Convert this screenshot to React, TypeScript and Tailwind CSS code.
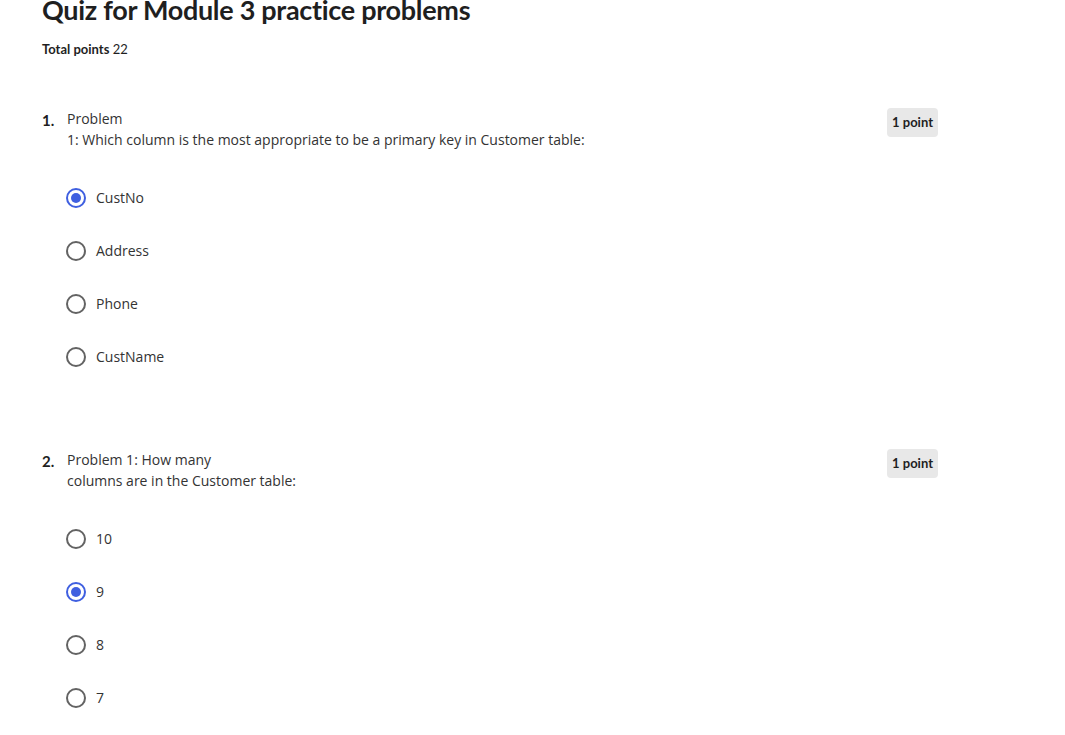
import React from 'react';

type Question = {
    num: string;
    lines: string[];
    options: string[];
    selected: number;
};

const questions: Question[] = [
    {
        num: '1.',
        lines: ['Problem', '1: Which column is the most appropriate to be a primary key in Customer table:'],
        options: ['CustNo', 'Address', 'Phone', 'CustName'],
        selected: 0,
    },
    {
        num: '2.',
        lines: ['Problem 1: How many', 'columns are in the Customer table:'],
        options: ['10', '9', '8', '7'],
        selected: 1,
    },
];

const Radio = ({ checked }: { checked: boolean }) => (
    <span
        className={`flex items-center justify-center w-[20px] h-[20px] rounded-full border-2 shrink-0 ${
            checked ? 'border-[#3f5fe0]' : 'border-[#636363]'
        }`}
    >
        {checked && <span className="w-[10px] h-[10px] rounded-full bg-[#3f5fe0]" />}
    </span>
);

export default function App() {
    return (
        <div className="min-h-[735px] bg-white text-[#1f1f1f] overflow-hidden" style={{ fontFamily: '"Open Sans", sans-serif' }}>
            <div className="pl-[42px] w-[938px]">
                <h1 className="text-[27px] leading-[32px] font-bold mt-[-6px] text-[#1f1f1f] font-['Lato',sans-serif] tracking-[-0.3px]">
                    Quiz for Module 3 practice problems
                </h1>
                <div className="mt-[15px] text-[13px] leading-[16px] font-['Lato',sans-serif]">
                    <span className="font-bold">Total points</span> 22
                </div>

                <div className="mt-[51px] flex flex-col gap-[66px]">
                    {questions.map((q) => (
                        <div key={q.num}>
                            <div className="flex items-start">
                                <span className="w-[25px] shrink-0 text-[15px] leading-[21px] font-bold font-['Lato',sans-serif] pt-[2px]">
                                    {q.num}
                                </span>
                                <div className="flex-1 text-[14px] leading-[21px] text-[#333]">
                                    {q.lines.map((l) => (
                                        <div key={l}>{l}</div>
                                    ))}
                                </div>
                                <span className="h-[29px] px-[5px] pt-[1px] flex items-center rounded bg-[#e8e8e8] text-[13px] font-bold font-['Lato',sans-serif]">
                                    1 point
                                </span>
                            </div>
                            <div className="mt-[21px] pl-[24px] flex flex-col">
                                {q.options.map((o, i) => (
                                    <label key={o} className="h-[53px] flex items-center gap-[10px] text-[14px] text-[#333]">
                                        <Radio checked={i === q.selected} />
                                        <span>{o}</span>
                                    </label>
                                ))}
                            </div>
                        </div>
                    ))}
                </div>
            </div>
        </div>
    );
}
